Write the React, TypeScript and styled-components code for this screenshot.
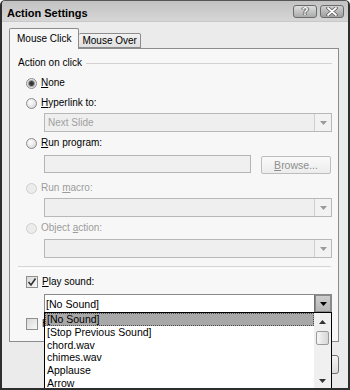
import * as React from "react";
import styled, { createGlobalStyle } from "styled-components";

const GlobalStyle = createGlobalStyle`
  html, body {
    margin: 0;
    padding: 0;
    background: #ffffff;
  }
  body {
    font-family: "Liberation Sans", Arial, sans-serif;
    font-size: 10px;
    color: #000;
  }
`;

const SOUNDS = [
  "[No Sound]",
  "[Stop Previous Sound]",
  "chord.wav",
  "chimes.wav",
  "Applause",
  "Arrow",
];

const Arrow = ({ color, up }: { color: string; up?: boolean }) => (
  <svg width="7" height="4" viewBox="0 0 7 4">
    <path d={up ? "M0 4 L3.5 0 L7 4 Z" : "M0 0 L7 0 L3.5 4 Z"} fill={color} />
  </svg>
);

const CloseGlyph = () => (
  <svg width="14" height="9" viewBox="0 0 14 9">
    <path d="M3 1 L11 8 M11 1 L3 8" stroke="#5a5a5a" strokeWidth="3.4" strokeLinecap="round" />
    <path d="M3 1 L11 8 M11 1 L3 8" stroke="#ffffff" strokeWidth="1.8" strokeLinecap="round" />
  </svg>
);

const CheckMark = () => (
  <svg width="10" height="10" viewBox="0 0 10 10">
    <path d="M1.5 5 L4 8 L8.5 1.5" stroke="#333" strokeWidth="1.6" fill="none" />
  </svg>
);

export default function App() {
  return (
    <>
      <GlobalStyle />
      <Window>
        <TitleBar>
          <Title>Action Settings</Title>
          <CaptionButtons>
            <CaptionButton>
              <HelpGlyph>?</HelpGlyph>
            </CaptionButton>
            <CaptionButton $dark>
              <CloseGlyph />
            </CaptionButton>
          </CaptionButtons>
        </TitleBar>

        <Body>
          <Tabs>
            <Tab $active>Mouse Click</Tab>
            <Tab>Mouse Over</Tab>
          </Tabs>

          <Panel>
            <GroupHeader>
              <span>Action on click</span>
              <GroupLine />
            </GroupHeader>

            <OptionRow $top={8}>
              <Radio $checked />
              <Label>
                <u>N</u>one
              </Label>
            </OptionRow>

            <OptionRow $top={8}>
              <Radio />
              <Label>
                <u>H</u>yperlink to:
              </Label>
            </OptionRow>
            <Combo $top={4}>
              <ComboText $muted>Next Slide</ComboText>
              <ComboButton>
                <Arrow color="#9a9a9a" />
              </ComboButton>
            </Combo>

            <OptionRow $top={5}>
              <Radio />
              <Label>
                <u>R</u>un program:
              </Label>
            </OptionRow>
            <FieldRow>
              <TextBox />
              <PushButton>
                <u>B</u>rowse...
              </PushButton>
            </FieldRow>

            <OptionRow $top={8}>
              <Radio $disabled />
              <Label $disabled>
                Run <u>m</u>acro:
              </Label>
            </OptionRow>
            <Combo $top={4}>
              <ComboText />
              <ComboButton>
                <Arrow color="#9a9a9a" />
              </ComboButton>
            </Combo>

            <OptionRow $top={5}>
              <Radio $disabled />
              <Label $disabled>
                Object <u>a</u>ction:
              </Label>
            </OptionRow>
            <Combo $top={5}>
              <ComboText />
              <ComboButton>
                <Arrow color="#9a9a9a" />
              </ComboButton>
            </Combo>

            <Separator />

            <OptionRow $top={7}>
              <CheckBox>
                <CheckMark />
              </CheckBox>
              <Label>
                <u>P</u>lay sound:
              </Label>
            </OptionRow>
            <Combo $top={6} $active>
              <ComboText $large>[No Sound]</ComboText>
              <ComboButton $pressed>
                <Arrow color="#000" />
              </ComboButton>
            </Combo>

            <OptionRow $top={5}>
              <CheckBox />
              <Label>Highlight click</Label>
            </OptionRow>
          </Panel>

          <ButtonBar>
            <DialogButton>OK</DialogButton>
            <DialogButton>Cancel</DialogButton>
          </ButtonBar>
        </Body>

        <DropList>
          <Items>
            {SOUNDS.map((name, i) => (
              <Item key={name} $selected={i === 0}>
                {name}
              </Item>
            ))}
          </Items>
          <ScrollBar>
            <ScrollArrow>
              <Arrow color="#333" up />
            </ScrollArrow>
            <Thumb />
            <Track />
            <ScrollArrow>
              <Arrow color="#333" />
            </ScrollArrow>
          </ScrollBar>
        </DropList>
      </Window>
    </>
  );
}

const Window = styled.div`
  position: relative;
  width: 350px;
  height: 390px;
  box-sizing: border-box;
  background: #ebebeb;
  border: 2px solid #2e2e2e;
  border-top: 1px solid #555;
  border-radius: 5px 5px 0 0;
  display: flex;
  flex-direction: column;
  overflow: hidden;
`;

const TitleBar = styled.div`
  height: 21px;
  display: flex;
  align-items: flex-start;
  justify-content: space-between;
  padding: 0 4px 0 5px;
  background: linear-gradient(#c2c2c2, #d6d6d6);
  border-bottom: 1px solid #c8c8c8;
  box-sizing: border-box;
`;

const Title = styled.div`
  font-weight: bold;
  font-size: 11px;
  line-height: 13px;
  margin-top: 6px;
  color: #000;
`;

const CaptionButtons = styled.div`
  display: flex;
  gap: 3px;
  margin-top: 4px;
`;

const CaptionButton = styled.div<{ $dark?: boolean }>`
  width: 24px;
  height: 13px;
  box-sizing: border-box;
  border: 1px solid #6c6c6c;
  border-radius: 3px;
  background: ${(p) =>
    p.$dark
      ? "linear-gradient(#d0d0d0, #9e9e9e)"
      : "linear-gradient(#dedede, #ababab)"};
  display: flex;
  align-items: center;
  justify-content: center;
`;

const HelpGlyph = styled.span`
  font-weight: bold;
  font-size: 11px;
  line-height: 11px;
  color: #fff;
  text-shadow: 0 0 1px #444, 1px 0 0 #666, -1px 0 0 #666;
`;

const Body = styled.div`
  flex: 1;
  display: flex;
  flex-direction: column;
  padding: 0 9px 0 7px;
`;

const Tabs = styled.div`
  display: flex;
  align-items: flex-end;
  margin-top: 6px;
  height: 20px;
`;

const Tab = styled.div<{ $active?: boolean }>`
  position: relative;
  z-index: ${(p) => (p.$active ? 1 : 0)};
  box-sizing: border-box;
  height: ${(p) => (p.$active ? 21 : 15)}px;
  margin-bottom: ${(p) => (p.$active ? -1 : 0)}px;
  padding: ${(p) => (p.$active ? "0 7px 2px 7px" : "0 3px")};
  display: flex;
  align-items: center;
  border: 1px solid #8c8c8c;
  border-bottom: ${(p) => (p.$active ? "none" : "1px solid #8c8c8c")};
  border-left: ${(p) => (p.$active ? "1px solid #8c8c8c" : "none")};
  border-radius: 2px 2px 0 0;
  background: ${(p) =>
    p.$active ? "#f7f7f7" : "linear-gradient(#f2f2f2, #e0e0e0)"};
  white-space: nowrap;
`;

const Panel = styled.div`
  height: 294px;
  box-sizing: border-box;
  border: 1px solid #8c8c8c;
  background: #f7f7f7;
  padding: 0 6px 0 8px;
  display: flex;
  flex-direction: column;
`;

const GroupHeader = styled.div`
  margin-top: 8px;
  height: 12px;
  display: flex;
  align-items: center;
  line-height: 12px;
`;

const GroupLine = styled.div`
  flex: 1;
  height: 1px;
  margin-left: 4px;
  background: #d2d2d2;
`;

const OptionRow = styled.div<{ $top: number }>`
  margin: ${(p) => p.$top}px 0 0 8px;
  height: 12px;
  display: flex;
  align-items: center;
  gap: 4px;
`;

const Radio = styled.div<{ $checked?: boolean; $disabled?: boolean }>`
  width: 11px;
  height: 11px;
  box-sizing: border-box;
  border-radius: 50%;
  border: 1px solid ${(p) => (p.$disabled ? "#cfcfcf" : "#8a8a8a")};
  background: ${(p) =>
    p.$disabled
      ? "#ececec"
      : p.$checked
      ? "radial-gradient(circle, #2a2a2a 0, #444 2px, #9a9a9a 3px, #e6e6e6 4px)"
      : "radial-gradient(circle at 40% 35%, #ffffff, #d0d0d0)"};
`;

const CheckBox = styled.div`
  width: 12px;
  height: 12px;
  box-sizing: border-box;
  border: 1px solid #8f8f8f;
  background: linear-gradient(135deg, #d8d8d8, #f8f8f8);
  display: flex;
  align-items: center;
  justify-content: center;
`;

const Label = styled.span<{ $disabled?: boolean }>`
  line-height: 12px;
  color: ${(p) => (p.$disabled ? "#9c9c9c" : "#000")};
  white-space: nowrap;
`;

const Combo = styled.div<{ $top: number; $active?: boolean }>`
  margin: ${(p) => p.$top}px 0 0 26px;
  height: 19px;
  box-sizing: border-box;
  display: flex;
  border: 1px solid ${(p) => (p.$active ? "#8a8a8a" : "#b8b8b8")};
  background: ${(p) => (p.$active ? "#ffffff" : "#efefef")};
`;

const ComboText = styled.div<{ $muted?: boolean; $large?: boolean }>`
  flex: 1;
  display: flex;
  align-items: center;
  padding-left: ${(p) => (p.$large ? 1 : 3)}px;
  font-size: ${(p) => (p.$large ? 10.6 : 10)}px;
  color: ${(p) => (p.$muted ? "#a0a0a0" : "#000")};
`;

const ComboButton = styled.div<{ $pressed?: boolean }>`
  width: 17px;
  display: flex;
  align-items: center;
  justify-content: center;
  box-sizing: border-box;
  border-left: 1px solid ${(p) => (p.$pressed ? "#6f6f6f" : "#cfcfcf")};
  background: ${(p) =>
    p.$pressed ? "linear-gradient(#cfcfcf, #b4b4b4)" : "#f2f2f2"};
  box-shadow: ${(p) => (p.$pressed ? "inset 0 0 0 1px #8a8a8a" : "none")};
`;

const FieldRow = styled.div`
  margin: 6px 0 0 26px;
  height: 19px;
  display: flex;
  align-items: flex-start;
  gap: 10px;
`;

const TextBox = styled.div`
  width: 207px;
  height: 18px;
  box-sizing: border-box;
  border: 1px solid #b4b4b4;
  background: #f0f0f0;
`;

const PushButton = styled.div`
  margin-top: 1px;
  width: 70px;
  height: 18px;
  box-sizing: border-box;
  border: 1px solid #bdbdbd;
  border-radius: 2px;
  background: linear-gradient(#fafafa, #ececec);
  color: #8e8e8e;
  display: flex;
  align-items: center;
  justify-content: center;
  font-size: 10.5px;
`;

const Separator = styled.div`
  margin-top: 8px;
  height: 1px;
  border-top: 1px solid #d6d6d6;
  border-bottom: 1px solid #ffffff;
  margin-right: 1px;
`;

const ButtonBar = styled.div`
  margin-top: 13px;
  display: flex;
  justify-content: flex-end;
  gap: 6px;
`;

const DialogButton = styled.div`
  width: 72px;
  height: 19px;
  box-sizing: border-box;
  border: 1px solid #707070;
  border-radius: 3px;
  background: linear-gradient(#f4f4f4, #dcdcdc);
  display: flex;
  align-items: center;
  justify-content: center;
`;

const DropList = styled.div`
  position: absolute;
  left: 42px;
  top: 311px;
  width: 288px;
  height: 77px;
  box-sizing: border-box;
  border: 1px solid #000;
  border-bottom: none;
  background: #fff;
  display: flex;
  z-index: 5;
`;

const Items = styled.div`
  flex: 1;
  display: flex;
  flex-direction: column;
  overflow: hidden;
`;

const Item = styled.div<{ $selected?: boolean }>`
  height: 12.8px;
  flex: none;
  box-sizing: border-box;
  line-height: 11px;
  padding-left: 1px;
  font-size: 10.5px;
  white-space: nowrap;
  background: ${(p) => (p.$selected ? "#a8a8a8" : "transparent")};
  border: 1px dotted ${(p) => (p.$selected ? "#4a4a4a" : "transparent")};
`;

const ScrollBar = styled.div`
  width: 17px;
  display: flex;
  flex-direction: column;
  background: #f0f0f0;
`;

const ScrollArrow = styled.div`
  height: 17px;
  display: flex;
  align-items: center;
  justify-content: center;
`;

const Thumb = styled.div`
  height: 14px;
  margin: 1px 2px 0;
  box-sizing: border-box;
  border: 1px solid #9a9a9a;
  border-radius: 2px;
  background: linear-gradient(90deg, #f6f6f6, #d6d6d6);
`;

const Track = styled.div`
  flex: 1;
`;
